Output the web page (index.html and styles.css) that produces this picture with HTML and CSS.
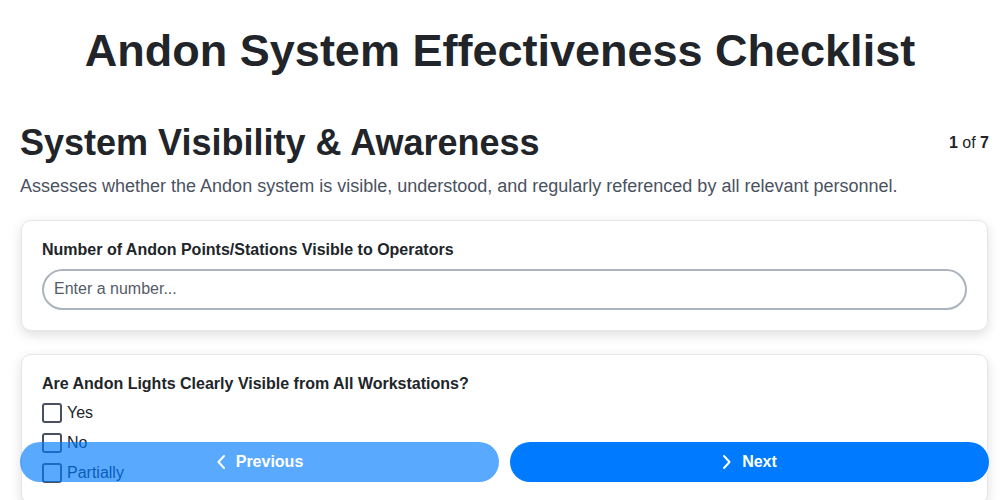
FILE: index.html
```html
<!DOCTYPE html>
<html lang="en">
<head>
<meta charset="utf-8">
<title>Andon System Effectiveness Checklist</title>
<link rel="stylesheet" href="styles.css">
</head>
<body>
<h1 class="title">Andon System Effectiveness Checklist</h1>
<main class="page">
  <div class="section-head">
    <h2 class="section-title">System Visibility &amp; Awareness</h2>
    <div class="progress"><b>1</b> of <b>7</b></div>
  </div>
  <p class="section-desc">Assesses whether the Andon system is visible, understood, and regularly referenced by all relevant personnel.</p>

  <div class="card">
    <label class="q-label" for="n1">Number of Andon Points/Stations Visible to Operators</label>
    <input id="n1" class="text-input" type="text" placeholder="Enter a number...">
  </div>

  <div class="card">
    <div class="q-label">Are Andon Lights Clearly Visible from All Workstations?</div>
    <div class="options">
      <label class="option"><span class="box"></span><span>Yes</span></label>
      <label class="option"><span class="box"></span><span>No</span></label>
      <label class="option"><span class="box"></span><span>Partially</span></label>
    </div>
  </div>
</main>
<nav class="nav">
  <button class="btn btn-prev" type="button">
    <svg width="10" height="16" viewBox="0 0 10 16"><path d="M8 2 L2.5 8 L8 14" fill="none" stroke="currentColor" stroke-width="2" stroke-linecap="round" stroke-linejoin="round"/></svg>
    <span>Previous</span>
  </button>
  <button class="btn btn-next" type="button">
    <svg width="10" height="16" viewBox="0 0 10 16"><path d="M2 2 L7.5 8 L2 14" fill="none" stroke="currentColor" stroke-width="2" stroke-linecap="round" stroke-linejoin="round"/></svg>
    <span>Next</span>
  </button>
</nav>
</body>
</html>
```
FILE: styles.css
```css
* { box-sizing: border-box; }
html, body { margin: 0; padding: 0; background: #fff; }
body {
  font-family: "Liberation Sans", Arial, sans-serif;
  color: #212529;
}
.title {
  margin: 25px 0 0;
  font-size: 45px;
  line-height: 1.15;
  font-weight: 700;
  text-align: center;
  color: #212529;
}
.page {
  padding: 0 11px 100px 20px;
}
.section-head {
  display: flex;
  justify-content: space-between;
  align-items: center;
  margin-top: 44px;
}
.section-title {
  margin: 0;
  font-size: 36px;
  line-height: 1.2;
  font-weight: 700;
}
.progress {
  font-size: 16px;
  color: #212529;
  padding-top: 1px;
}
.section-desc {
  margin: 9px 0 20px;
  font-size: 18px;
  line-height: 1.5;
  color: #4a5260;
}
.card {
  background: #fff;
  border: 1px solid #e4e6ea;
  border-radius: 10px;
  box-shadow: 0 4px 12px rgba(0, 0, 0, 0.13);
  padding: 20px;
  margin: 0 1px 23px;
}
.q-label {
  display: block;
  font-size: 16px;
  font-weight: 700;
  line-height: 18px;
  color: #212529;
  margin-bottom: 10px;
}
.text-input {
  display: block;
  width: 100%;
  height: 41px;
  border: 2px solid #abb4bd;
  border-radius: 21px;
  padding: 0 10px;
  font-family: inherit;
  font-size: 16px;
  color: #212529;
  background: #fff;
  outline: none;
}
.text-input::placeholder { color: #555c68; }
.options {
  display: flex;
  flex-direction: column;
  gap: 10px;
}
.option {
  display: flex;
  align-items: center;
  gap: 5px;
  font-size: 16px;
  line-height: 20px;
  color: #212529;
}
.box {
  width: 20px;
  height: 20px;
  border: 2px solid #4a5060;
  border-radius: 3px;
  background: #fff;
  flex: none;
}
.nav {
  position: fixed;
  left: 20px;
  right: 11px;
  bottom: 18px;
  display: flex;
  gap: 11px;
}
.btn {
  flex: 1;
  height: 40px;
  border: none;
  border-radius: 20px;
  background: #007bff;
  color: #fff;
  font-family: inherit;
  font-size: 16px;
  font-weight: 700;
  display: flex;
  align-items: center;
  justify-content: center;
  gap: 10px;
  cursor: pointer;
}
.btn-prev { opacity: 0.65; }
```
